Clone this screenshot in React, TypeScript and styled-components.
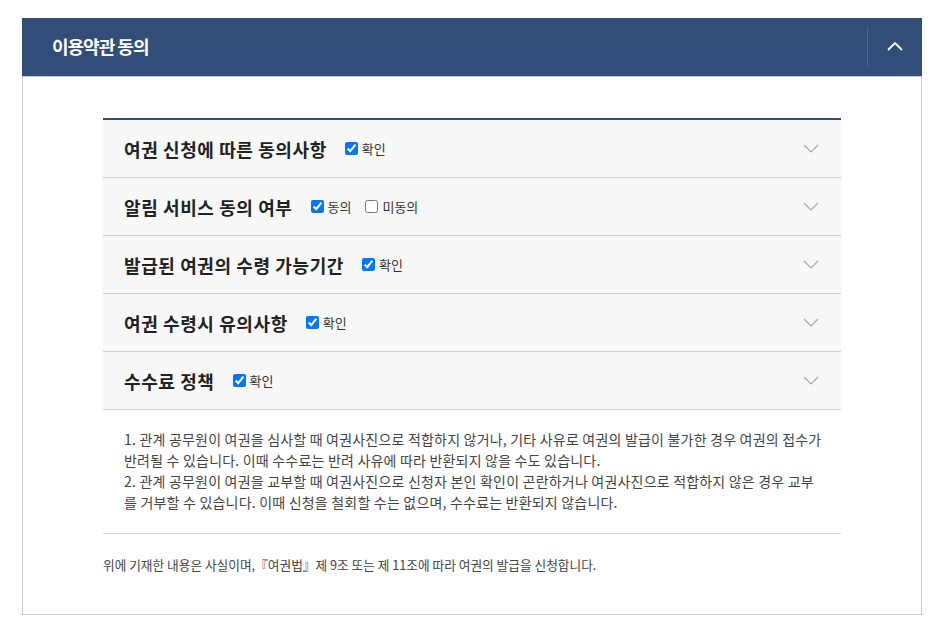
import React from 'react';
import styled, {createGlobalStyle} from 'styled-components';

const GlobalStyle = createGlobalStyle`
    body {
        margin: 0;
        background: #ffffff;
        font-family: "Noto Sans CJK KR", "Noto Sans", sans-serif;
        color: #222222;
    }
`;

type Option = { label: string; checked: boolean };

const sections: { title: string; options: Option[] }[] = [
    {title: '여권 신청에 따른 동의사항', options: [{label: '확인', checked: true}]},
    {title: '알림 서비스 동의 여부', options: [{label: '동의', checked: true}, {label: '미동의', checked: false}]},
    {title: '발급된 여권의 수령 가능기간', options: [{label: '확인', checked: true}]},
    {title: '여권 수령시 유의사항', options: [{label: '확인', checked: true}]},
    {title: '수수료 정책', options: [{label: '확인', checked: true}]},
];

function ChevronDown() {
    return (
        <svg width="16" height="9" viewBox="0 0 16 9" fill="none">
            <path d="M1 1l7 7 7-7" stroke="#a8a8a8" strokeWidth="1.2"/>
        </svg>
    );
}

function ChevronUp() {
    return (
        <svg width="16" height="9" viewBox="0 0 16 9" fill="none">
            <path d="M1 8l7-7 7 7" stroke="#ffffff" strokeWidth="1.8"/>
        </svg>
    );
}

export default function App() {
    return (
        <Page>
            <GlobalStyle/>
            <Panel>
                <Header>
                    <HeaderTitle>이용약관 동의</HeaderTitle>
                    <ToggleButton type="button" aria-label="접기">
                        <ChevronUp/>
                    </ToggleButton>
                </Header>
                <Body>
                    <List>
                        {sections.map((s) => (
                            <Row key={s.title}>
                                <RowTitle>{s.title}</RowTitle>
                                <Options>
                                    {s.options.map((o) => (
                                        <CheckLabel key={o.label}>
                                            <input type="checkbox" defaultChecked={o.checked}/>
                                            {o.label}
                                        </CheckLabel>
                                    ))}
                                </Options>
                                <RowArrow>
                                    <ChevronDown/>
                                </RowArrow>
                            </Row>
                        ))}
                    </List>
                    <Notice>
                        <p>1. 관계 공무원이 여권을 심사할 때 여권사진으로 적합하지 않거나, 기타 사유로 여권의 발급이 불가한 경우 여권의 접수가 반려될 수 있습니다. 이때 수수료는 반려 사유에 따라 반환되지 않을 수도 있습니다.</p>
                        <p>2. 관계 공무원이 여권을 교부할 때 여권사진으로 신청자 본인 확인이 곤란하거나 여권사진으로 적합하지 않은 경우 교부를 거부할 수 있습니다. 이때 신청을 철회할 수는 없으며, 수수료는 반환되지 않습니다.</p>
                    </Notice>
                    <Declaration>위에 기재한 내용은 사실이며,『여권법』제 9조 또는 제 11조에 따라 여권의 발급을 신청합니다.</Declaration>
                </Body>
            </Panel>
        </Page>
    );
}

const Page = styled.div`
    padding: 18px 25px 0 22px;
`;

const Panel = styled.section`
    width: 900px;
    box-sizing: border-box;
    border: 1px solid #cccccc;
    border-top: none;
`;

const Header = styled.div`
    display: flex;
    align-items: center;
    height: 58px;
    margin: 0 -1px;
    background: #334d79;
    border-bottom: 1px solid #c8c8c8;
`;

const HeaderTitle = styled.h2`
    flex: 1;
    margin: 0;
    padding: 0 0 2px 30px;
    font-size: 18px;
    font-weight: 700;
    letter-spacing: -1px;
    line-height: 1;
    color: #ffffff;
`;

const ToggleButton = styled.button`
    display: flex;
    align-items: center;
    justify-content: center;
    width: 54px;
    height: 40px;
    margin-right: 1px;
    padding: 0 0 2px;
    border: none;
    border-left: 1px solid #4b6390;
    background: transparent;
    cursor: pointer;
`;

const Body = styled.div`
    padding: 41px 80px 0;
`;

const List = styled.ul`
    margin: 0;
    padding: 0;
    list-style: none;
    border-top: 2px solid #334d79;
`;

const Row = styled.li`
    display: flex;
    align-items: center;
    height: 57px;
    padding: 0 22px 0 21px;
    background: #f8f8f8;
    border-bottom: 1px solid #cfcfcf;
`;

const RowTitle = styled.h3`
    margin: 0 18px 0 0;
    font-size: 18px;
    font-weight: 700;
    letter-spacing: 0.6px;
    line-height: 1;
    color: #222222;
`;

const Options = styled.div`
    display: flex;
    align-items: center;
    gap: 14px;
    flex: 1;
`;

const CheckLabel = styled.label`
    display: flex;
    align-items: center;
    font-size: 13px;
    color: #333333;
    line-height: 1;

    input {
        width: 13px;
        height: 13px;
        margin: 0 4px 0 0;
    }
`;

const RowArrow = styled.span`
    display: flex;
    align-items: center;
`;

const Notice = styled.div`
    padding: 19px 16px 20px 21px;
    border-bottom: 1px solid #d6d6d6;

    p {
        margin: 0;
        font-size: 14px;
        letter-spacing: 0.2px;
        line-height: 21px;
        color: #444444;
    }
`;

const Declaration = styled.p`
    margin: 0;
    padding: 22px 0 41px;
    font-size: 12.7px;
    line-height: 17px;
    color: #444444;
`;
